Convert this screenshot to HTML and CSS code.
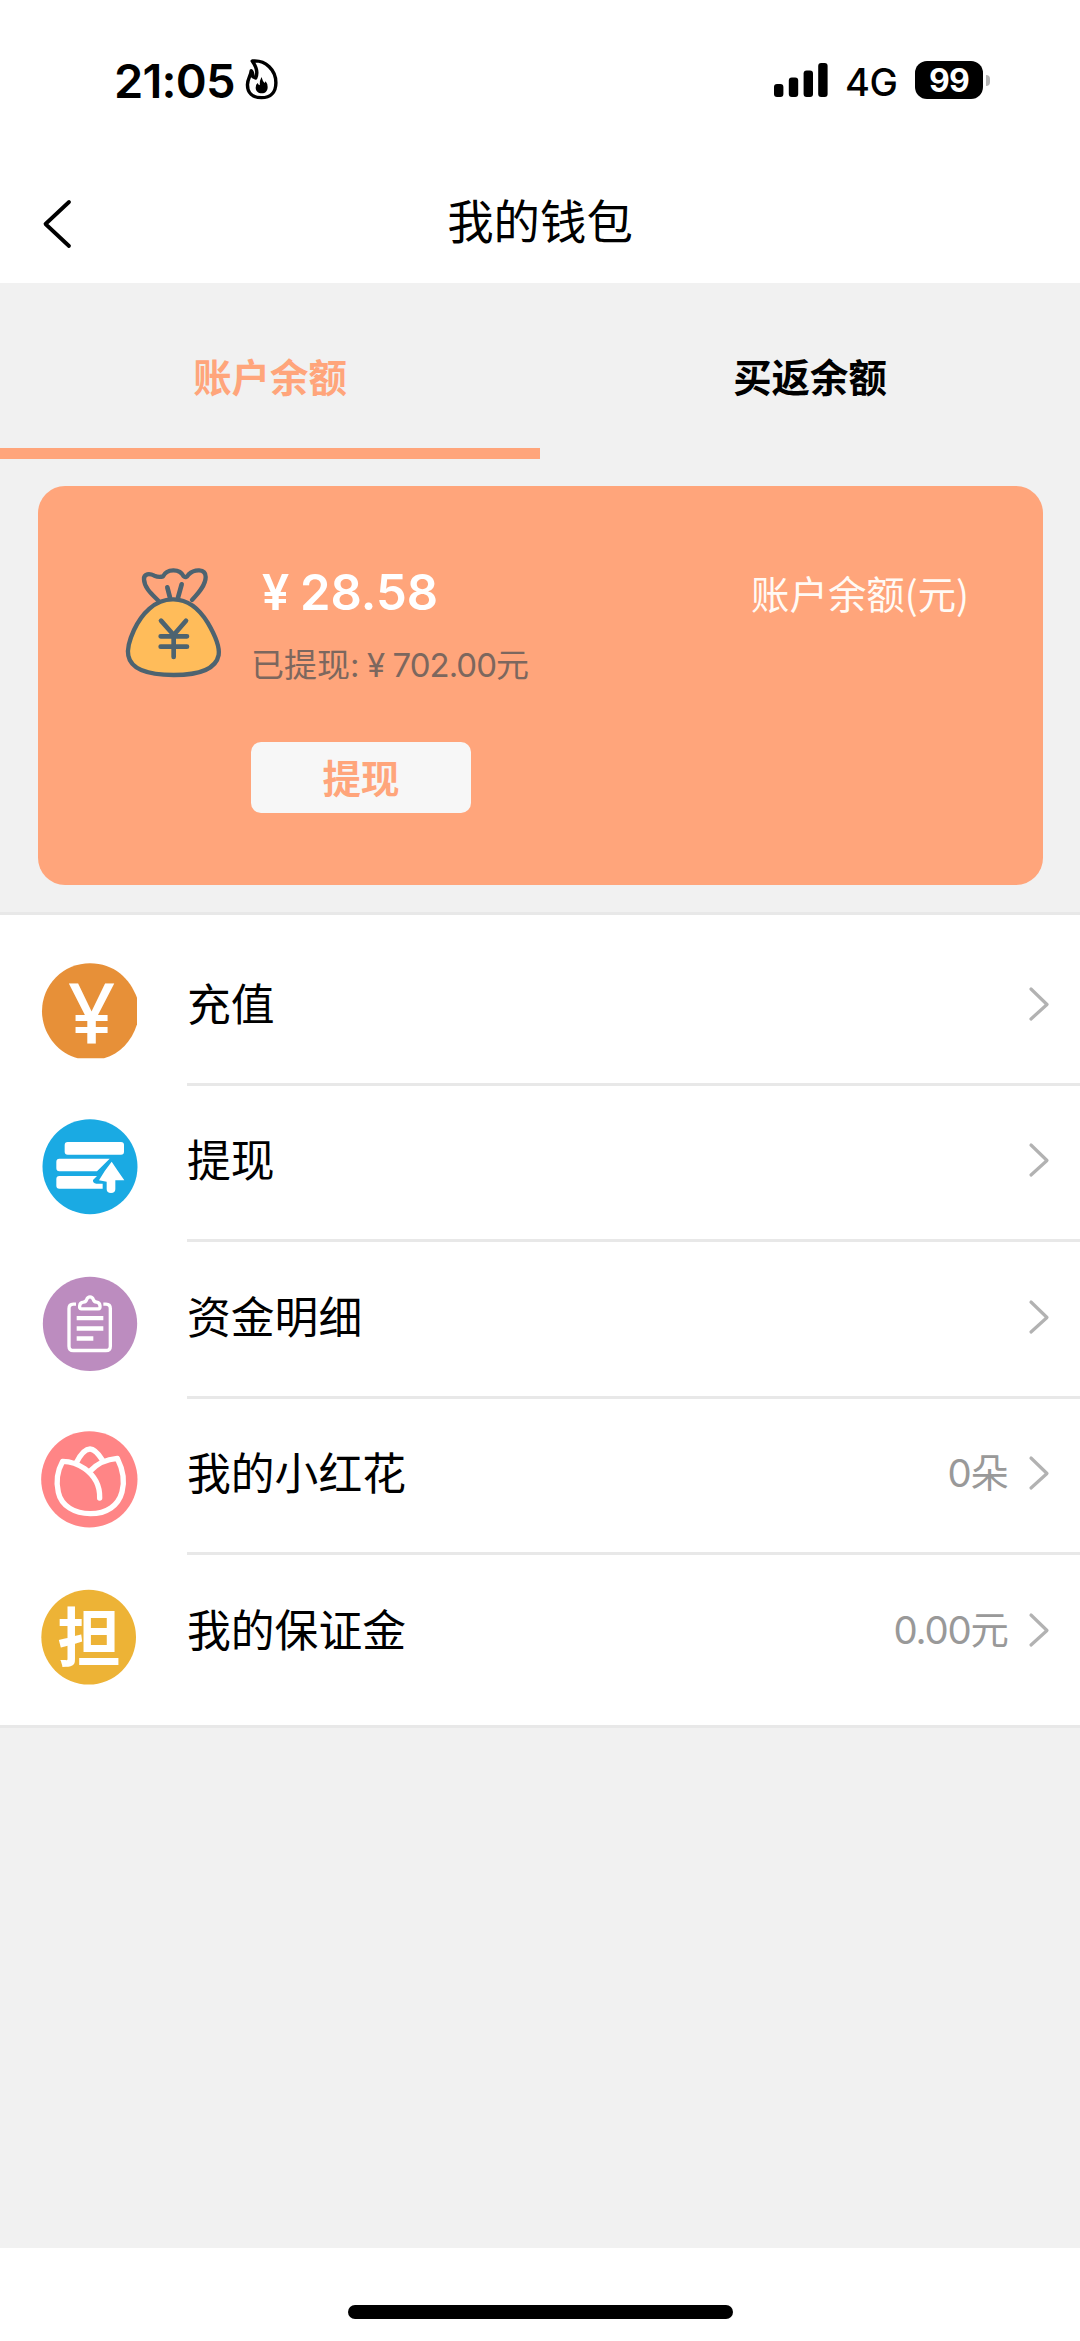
FILE: index.html
```html
<!DOCTYPE html>
<html lang="zh-CN">
<head>
<meta charset="utf-8">
<title>我的钱包</title>
<link rel="stylesheet" href="styles.css">
</head>
<body>
<div class="screen">
  <header class="top">
    <div class="status">
      <div class="status-left">
        <span class="time">21:05</span>
        <svg class="flame" viewBox="705 80 108 135" preserveAspectRatio="none">
          <path d="M732 92C772 88 801 120 801 157C801 186 785 202 759 202C733 202 718 188 718 163C718 146 728 136 729 121Q734 126 734 139L742 143Q752 121 732 92Z" fill="none" stroke="#000" stroke-width="10" stroke-linejoin="round"/>
          <path d="M759 140Q762 152 768 158L771 153Q777 160 777 170C777 182 770 189 760 189C749 189 742 182 742 172Q742 161 748 158Q749 164 754 165Q753 150 759 140Z"/>
        </svg>
      </div>
      <div class="status-right">
        <svg class="signal" viewBox="0 0 54 34">
          <rect x="0" y="21" width="9.4" height="13" rx="3"/>
          <rect x="14.8" y="14.6" width="9.4" height="19.4" rx="3"/>
          <rect x="29.6" y="7.4" width="9.4" height="26.6" rx="3"/>
          <rect x="44.2" y="0" width="9.4" height="34" rx="3"/>
        </svg>
        <span class="net">4G</span>
        <span class="battery">99</span>
        <span class="nub"></span>
      </div>
    </div>
    <div class="nav">
      <svg class="back" viewBox="0 0 30 50"><path d="M27 3L3.5 25L27 47" fill="none" stroke="#000" stroke-width="3.8" stroke-linecap="round" stroke-linejoin="round"/></svg>
      <h1 class="title">我的钱包</h1>
    </div>
  </header>

  <nav class="tabs">
    <span class="tab tab-active">账户余额</span>
    <span class="tab">买返余额</span>
  </nav>

  <section class="card">
    <svg class="bag" viewBox="70 75 300 345">
      <g fill="none" stroke="#4d6370" stroke-width="13" stroke-linecap="round" stroke-linejoin="round">
        <path d="M176 182C158 164 134 144 133 118C132 100 150 100 164 107Q178 113 190 109C201 86 240 84 252 109Q259 116 267 103C283 88 318 84 318 111C318 136 296 160 277 180"/>
        <path d="M222 178C164 176 124 225 103 270C91 296 81 322 86 347C95 395 158 405 222 405C286 405 348 391 357 345C361 318 344 282 324 248C301 210 270 179 222 178Z" fill="#ffbc5a"/>
        <path d="M203 142L211 173M246 133L235 173M184 242L222 285L259 242M222 285V351M183 289H262M183 320H262" stroke-width="14"/>
      </g>
    </svg>
    <div class="money">
      <div class="amount"><span class="yuan">¥</span>28.58</div>
      <div class="withdrawn">已提现:<span class="yuan">¥</span><span class="num">702.00</span>元</div>
      <button class="withdraw">提现</button>
    </div>
    <div class="caption">账户余额(元)</div>
  </section>

  <ul class="list">
    <li class="row">
      <svg class="icon" viewBox="60 301.5 300 300">
        <path d="M173 593C115 580 66 520 66 452A144 144 0 0 1 210 308C282 308 330 354 351 412V491C335 542 300 580 252 593Z" fill="#e79038"/>
        <text class="yen" x="215" y="547" text-anchor="middle">¥</text>
      </svg>
      <div class="cell"><span class="label">充值</span><svg class="arrow" viewBox="0 0 22 36"><path d="M3 3L19 18.5L3 33"/></svg></div>
    </li>
    <li class="row">
      <svg class="icon" viewBox="60 771 300 300">
        <circle cx="210" cy="920" r="142.5" fill="#1aaae3"/>
        <rect x="134" y="846" width="178" height="38" rx="9" fill="#fff"/>
        <path d="M118 896H269L231 934H118Q109 934 109 925V905Q109 896 118 896ZM118 948H231L219 960Q218 970 229 971H248V986H118Q109 986 109 977V957Q109 948 118 948ZM275 905Q293 932 313 961H286V988Q286 999 273 999Q260 999 260 988V965L237 961Q253 932 275 905Z" fill="#fff"/>
      </svg>
      <div class="cell"><span class="label">提现</span><svg class="arrow" viewBox="0 0 22 36"><path d="M3 3L19 18.5L3 33"/></svg></div>
    </li>
    <li class="row">
      <svg class="icon" viewBox="60 100.5 300 300">
        <circle cx="210" cy="250" r="141.5" fill="#bc8cbf"/>
        <g fill="none" stroke="#fff" stroke-width="10" stroke-linejoin="round">
          <path d="M168 191H160Q147 191 147 204V317Q147 330 160 330H258Q271 330 271 317V204Q271 191 258 191H250"/>
          <path d="M183 205Q178 205 179 196Q180 186 190 185Q198 184 200 177Q203 169 210 169Q217 169 220 177Q222 184 230 185Q239 186 240 196Q241 205 235 205Z"/>
          <path d="M170 233H250M170 264H250M170 294H220" stroke-width="13"/>
        </g>
      </svg>
      <div class="cell"><span class="label">资金明细</span><svg class="arrow" viewBox="0 0 22 36"><path d="M3 3L19 18.5L3 33"/></svg></div>
    </li>
    <li class="row">
      <svg class="icon" viewBox="60 570 300 300">
        <circle cx="208" cy="718" r="144.5" fill="#ff8586"/>
        <path d="M239 774C240 738 225 708 194 686Q164 665 128 664C111 695 108 728 115 757C124 798 164 821 211 821C260 821 295 797 306 756C316 720 308 687 292 655C258 658 233 669 212 692M169 668Q190 627 210 627Q226 627 248 661" fill="none" stroke="#fff" stroke-width="16" stroke-linecap="round" stroke-linejoin="round"/>
      </svg>
      <div class="cell"><span class="label">我的小红花</span><span class="value"><span class="num">0</span>朵</span><svg class="arrow" viewBox="0 0 22 36"><path d="M3 3L19 18.5L3 33"/></svg></div>
    </li>
    <li class="row">
      <svg class="icon" viewBox="60 1039.5 300 300">
        <circle cx="206" cy="1190" r="142" fill="#edb336"/>
        <text class="dan" x="207" y="1262" text-anchor="middle">担</text>
      </svg>
      <div class="cell"><span class="label">我的保证金</span><span class="value"><span class="num">0.00</span>元</span><svg class="arrow" viewBox="0 0 22 36"><path d="M3 3L19 18.5L3 33"/></svg></div>
    </li>
  </ul>

  <footer class="home"><span class="home-bar"></span></footer>
</div>
</body>
</html>
```

FILE: styles.css
```css
* { box-sizing: border-box; }

body {
  margin: 0;
  background: #f1f1f1;
  color: #000;
  font-family: Inter, "Noto Sans CJK SC", sans-serif;
}

.screen {
  width: 1080px;
  height: 2341px;
  display: flex;
  flex-direction: column;
  overflow: hidden;
}

.top {
  height: 283px;
  background: #fff;
}

.status {
  height: 160px;
  padding: 0 90px 0 114px;
  display: flex;
  justify-content: space-between;
  align-items: center;
}

.status-left,
.status-right { display: flex; align-items: center; }

.time {
  width: 129px;
  font-size: 47px;
  font-weight: 600;
  letter-spacing: -0.8px;
  line-height: 60px;
  margin-top: 1px;
}

.flame { width: 37px; height: 45px; margin-top: -2px; }

.signal { width: 54px; height: 34px; }

.net {
  width: 70px;
  margin: 3px 0 0 17px;
  font-size: 38px;
  font-weight: 500;
  letter-spacing: -0.5px;
  line-height: 40px;
}

.battery {
  width: 68px;
  height: 38px;
  padding-top: 1px;
  border-radius: 12px;
  background: #000;
  color: #fff;
  font-size: 32px;
  font-weight: 700;
  letter-spacing: -0.8px;
  line-height: 38px;
  text-align: center;
}

.nub {
  width: 4px;
  height: 11px;
  margin-left: 3px;
  border-radius: 0 4px 4px 0;
  background: #b5b5b5;
}

.nav {
  height: 123px;
  padding: 0 42px;
  display: grid;
  grid-template-columns: 60px 1fr 60px;
  align-items: center;
}

.back { width: 30px; height: 50px; margin-top: 5px; }

.title {
  margin: 0;
  font-size: 46.4px;
  font-weight: 400;
  line-height: 60px;
  text-align: center;
}

.tabs {
  height: 176px;
  display: flex;
}

.tab {
  flex: 1;
  padding-top: 67px;
  border-bottom: 11px solid transparent;
  font-size: 38.4px;
  font-weight: 700;
  line-height: 56px;
  text-align: center;
}

.tab-active { color: #ffa57b; border-bottom-color: #ffa57b; }

.card {
  height: 399px;
  margin: 27px 37px 27px 38px;
  padding: 79px 74px 0 85px;
  display: flex;
  border-radius: 27px;
  background: #ffa57b;
}

.bag { width: 100px; height: 115px; }

.money {
  flex: 1;
  padding-left: 28px;
  display: flex;
  flex-direction: column;
  align-items: flex-start;
}

.yuan {
  display: inline-block;
  width: 1em;
  text-align: center;
}

.amount {
  color: #fff;
  font-size: 49px;
  font-weight: 600;
  line-height: 56px;
}

.withdrawn {
  margin-top: 20px;
  color: #7c675e;
  font-size: 33px;
  line-height: 48px;
}

.num { letter-spacing: -0.03em; }

.withdraw {
  width: 220px;
  height: 71px;
  margin: 53px 0 0;
  padding: 0 0 4px;
  border: 0;
  border-radius: 10px;
  background: #f7f7f7;
  color: #ffa57b;
  font: inherit;
  font-size: 38.4px;
  font-weight: 700;
}

.caption {
  margin-top: -1px;
  color: #fffaf5;
  font-family: "Noto Sans CJK SC", sans-serif;
  font-size: 38.4px;
  line-height: 56px;
}

.list {
  height: 816px;
  margin: 0;
  padding: 14px 0;
  border: solid #e8e8e8;
  border-width: 3px 0;
  background: #fff;
  list-style: none;
}

.row {
  height: 156.5px;
  display: flex;
  align-items: flex-start;
}

.icon {
  width: 100px;
  height: 100px;
  margin: 31.5px 47px 0 40px;
  overflow: visible;
}

.yen {
  fill: #fff;
  font-family: "Noto Sans", sans-serif;
  font-size: 248px;
  font-weight: 500;
}

.dan {
  fill: #fff;
  font-family: "Noto Sans CJK SC", sans-serif;
  font-size: 190px;
  font-weight: 700;
}

.cell {
  flex: 1;
  height: 100%;
  padding-right: 30px;
  display: flex;
  align-items: center;
  border-bottom: 3px solid #e8e8e8;
}

.row:last-child .cell { border-bottom-color: transparent; }

.label {
  flex: 1;
  font-size: 43.8px;
  line-height: 60px;
}

.value {
  color: #999;
  font-size: 38.4px;
  line-height: 56px;
  margin: -4px 19px 0 0;
}

.arrow {
  width: 22px;
  height: 36px;
  margin-top: -4px;
  fill: none;
  stroke: #b2b2b2;
  stroke-width: 3.2;
  stroke-linecap: round;
  stroke-linejoin: round;
}

.home {
  height: 93px;
  margin-top: auto;
  padding-top: 57px;
  background: #fff;
}

.home-bar {
  display: block;
  width: 385px;
  height: 14px;
  margin: 0 auto;
  border-radius: 7px;
  background: #000;
}
```
